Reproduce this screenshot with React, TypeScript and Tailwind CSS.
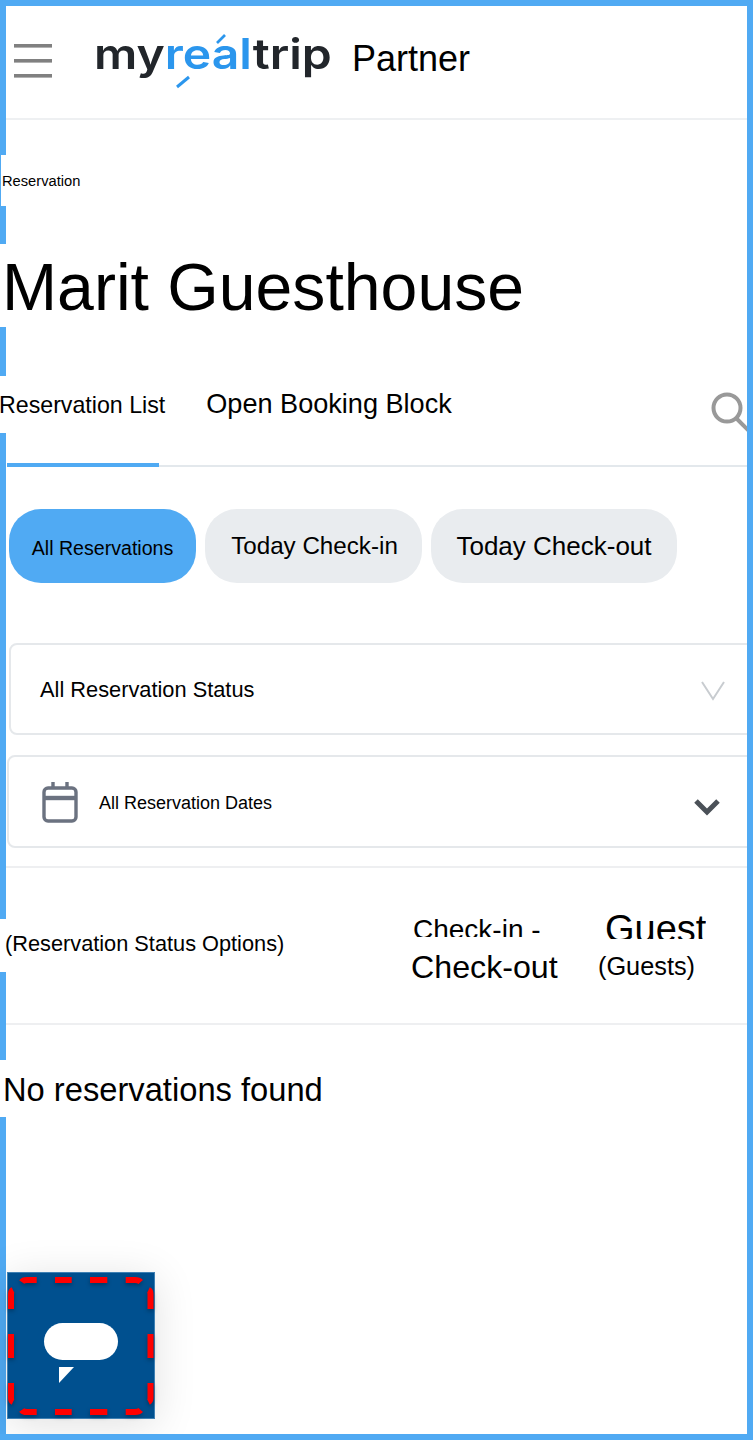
import React from "react";

function Hamburger() {
  return (
    <svg width="38" height="36" viewBox="0 0 38 36" className="mt-[-2px] shrink-0 blur-[0.4px]">
      <rect x="0" y="1" width="38" height="3.6" fill="#808080" />
      <rect x="0" y="16" width="38" height="3.6" fill="#808080" />
      <rect x="0" y="31" width="38" height="3.6" fill="#808080" />
    </svg>
  );
}

function Logo() {
  return (
    <div className="relative ml-[42px] mt-[-16px] w-[237px] shrink-0 whitespace-nowrap text-[42px] font-semibold leading-none blur-[0.6px] [font-family:Inter,sans-serif]">
      <div className="origin-left scale-x-[1.145]">
        <span className="text-[#22262b]">my</span>
        <span className="text-[#2b96ed]">real</span>
        <span className="text-[#22262b]">trip</span>
      </div>
      <svg width="237" height="60" viewBox="0 0 237 60" className="absolute left-0 top-[-3px]">
        <path d="M123 13 L131 5" stroke="#2b96ed" strokeWidth="2.6" />
        <path d="M83 57 L95 47" stroke="#2b96ed" strokeWidth="3" />
      </svg>
    </div>
  );
}

function Calendar() {
  return (
    <svg width="36" height="42" viewBox="0 0 36 42" fill="none" stroke="#6b7280" strokeWidth="3.4" className="shrink-0 blur-[0.3px]">
      <rect x="2" y="7" width="32" height="33" rx="4" />
      <path d="M2 17 H34" strokeWidth="4.4" />
      <path d="M11 1 V8 M25 1 V8" />
    </svg>
  );
}

function Dashes() {
  const d =
    "M14.7 10 Q16 8 20 8 H29.7 M48 8 H64.7 M83 8 H100.3 M118.7 8 H128 Q132 8 133.7 10 " +
    "M4 37 V22 Q4 19 6 18 M4 62 V86 M4 111 V126 Q4 129 6 130 " +
    "M143.5 37 V22 Q143.5 19 141.5 18 M143.5 62 V86 M143.5 111 V126 Q143.5 129 141.5 130 " +
    "M14.7 138 Q16 140 20 140 H29.7 M48 140 H64.7 M83 140 H100.3 M118.7 140 H128 Q132 140 133.7 138";
  return (
    <svg width="148" height="147" viewBox="0 0 148 147" fill="none" className="absolute left-0 top-0 drop-shadow-[0_2px_2px_rgba(0,0,0,0.3)]">
      <path d={d} stroke="#ff0000" strokeWidth="6" />
    </svg>
  );
}

export default function App() {
  return (
    <div className="box-border h-[1440px] w-[753px] border-[6px] border-[#50aaf3] bg-white text-black [font-family:'Liberation_Sans',Arial,sans-serif]">
      <div className="relative ml-[-6px] h-full overflow-hidden pl-[6px]">
        <header className="flex h-[114px] items-center border-b-2 border-[#eef0f2] pl-2">
          <Hamburger />
          <Logo />
          <span className="ml-[21px] mt-[-6px] text-[36px] leading-none">Partner</span>
        </header>

        <div className="relative ml-[-5px] mt-[35px] flex h-[51px] w-[90px] items-center bg-white pl-[1px] pt-[2px] text-[14.7px]">Reservation</div>

        <h1 className="relative ml-[-6px] mt-[38px] flex h-[83px] w-[540px] items-center bg-white pl-[2px] pt-[4px] text-[66.15px] font-normal leading-none">Marit Guesthouse</h1>

        <nav className="relative ml-[-6px] mt-[49px] h-[91px] w-[760px]">
          <div className="flex h-[57px] items-start bg-white">
            <span className="ml-[-1px] mt-[18px] text-[23.2px] leading-none">Reservation List</span>
            <span className="ml-[41px] mt-[14px] text-[27.1px] leading-none">Open Booking Block</span>
            <svg width="40" height="44" viewBox="0 0 40 44" fill="none" stroke="#999" strokeWidth="4" className="ml-auto mr-[9px] mt-[15px] blur-[0.4px]">
              <circle cx="16" cy="17" r="13.5" />
              <path d="M25 27 L40 42" />
            </svg>
          </div>
          <div className="ml-[7px] mt-[30px] flex h-[4px] items-end border-b-2 border-[#e3e8ec]">
            <div className="mb-[-2px] h-[4px] w-[152px] bg-[#50aaf3]" />
          </div>
        </nav>

        <div className="ml-[3px] mt-[42px] flex gap-[9px]">
          <div className="flex h-[74px] w-[187px] items-center justify-center rounded-[32px] bg-[#50aaf3] pt-[5px] text-[19.6px]">All Reservations</div>
          <div className="flex h-[74px] w-[217px] items-center justify-center rounded-[32px] bg-[#e9ecef] pl-[2px] text-[24.2px]">Today Check-in</div>
          <div className="flex h-[74px] w-[246px] items-center justify-center rounded-[32px] bg-[#e9ecef] text-[26px]">Today Check-out</div>
        </div>

        <div className="ml-[3px] mt-[60px] flex h-[92px] w-[750px] items-center rounded-[8px] border-2 border-[#e5e8eb] pl-[29px] text-[21.8px]">
          <span className="mt-[2px]">All Reservation Status</span>
          <svg width="24" height="20" viewBox="0 0 24 20" fill="none" stroke="#c8ccd0" strokeWidth="2" className="ml-auto mr-[32px] mt-[4px]">
            <path d="M1 1 L12 18 L23 1" />
          </svg>
        </div>

        <div className="ml-[1px] mt-[20px] flex h-[93px] w-[752px] items-center rounded-[8px] border-2 border-[#e5e8eb] pl-[33px] text-[18px]">
          <Calendar />
          <span className="ml-[21px] mt-[3px]">All Reservation Dates</span>
          <svg width="26" height="18" viewBox="0 0 26 18" fill="none" stroke="#4b5158" strokeWidth="5" className="ml-auto mr-[37px] mt-[10px]">
            <path d="M2 3 L13 14 L24 3" />
          </svg>
        </div>

        <section className="relative mt-[18px] h-[159px] border-y-2 border-[#eeeff1]">
          <div className="absolute left-[-6px] top-[51px] flex h-[53px] w-[300px] items-center bg-white pb-[2px] pl-[5px] text-[21.75px]">(Reservation Status Options)</div>
          <div className="absolute left-[407px] top-[45px] h-[24px] overflow-hidden text-[28px] leading-[33px]">Check-in -</div>
          <div className="absolute left-[405px] top-[79px] text-[32.2px] leading-[40px]">Check-out</div>
          <div className="absolute left-[599px] top-[39px] h-[32px] overflow-hidden text-[38px] leading-[44px]">Guest</div>
          <div className="absolute left-[592px] top-[82px] text-[25.3px] leading-[32px]">(Guests)</div>
        </section>

        <div className="relative ml-[-6px] mt-[35px] flex h-[57px] w-[340px] items-center bg-white pl-[3px] pt-[3px] text-[32.7px]">No reservations found</div>

        <button className="absolute left-[7px] top-[1266px] h-[147px] w-[148px] bg-[#00508f] shadow-[0_6px_40px_rgba(0,0,0,0.12)] ring-1 ring-inset ring-[#3f80b3]">
          <Dashes />
          <div className="absolute left-[37px] top-[51px] h-[37px] w-[74px] rounded-[19px] bg-white" />
          <svg width="15" height="16" viewBox="0 0 15 16" className="absolute left-[52px] top-[95px]">
            <path d="M0 0 H15 L0 16 Z" fill="#fff" />
          </svg>
        </button>
      </div>
    </div>
  );
}
